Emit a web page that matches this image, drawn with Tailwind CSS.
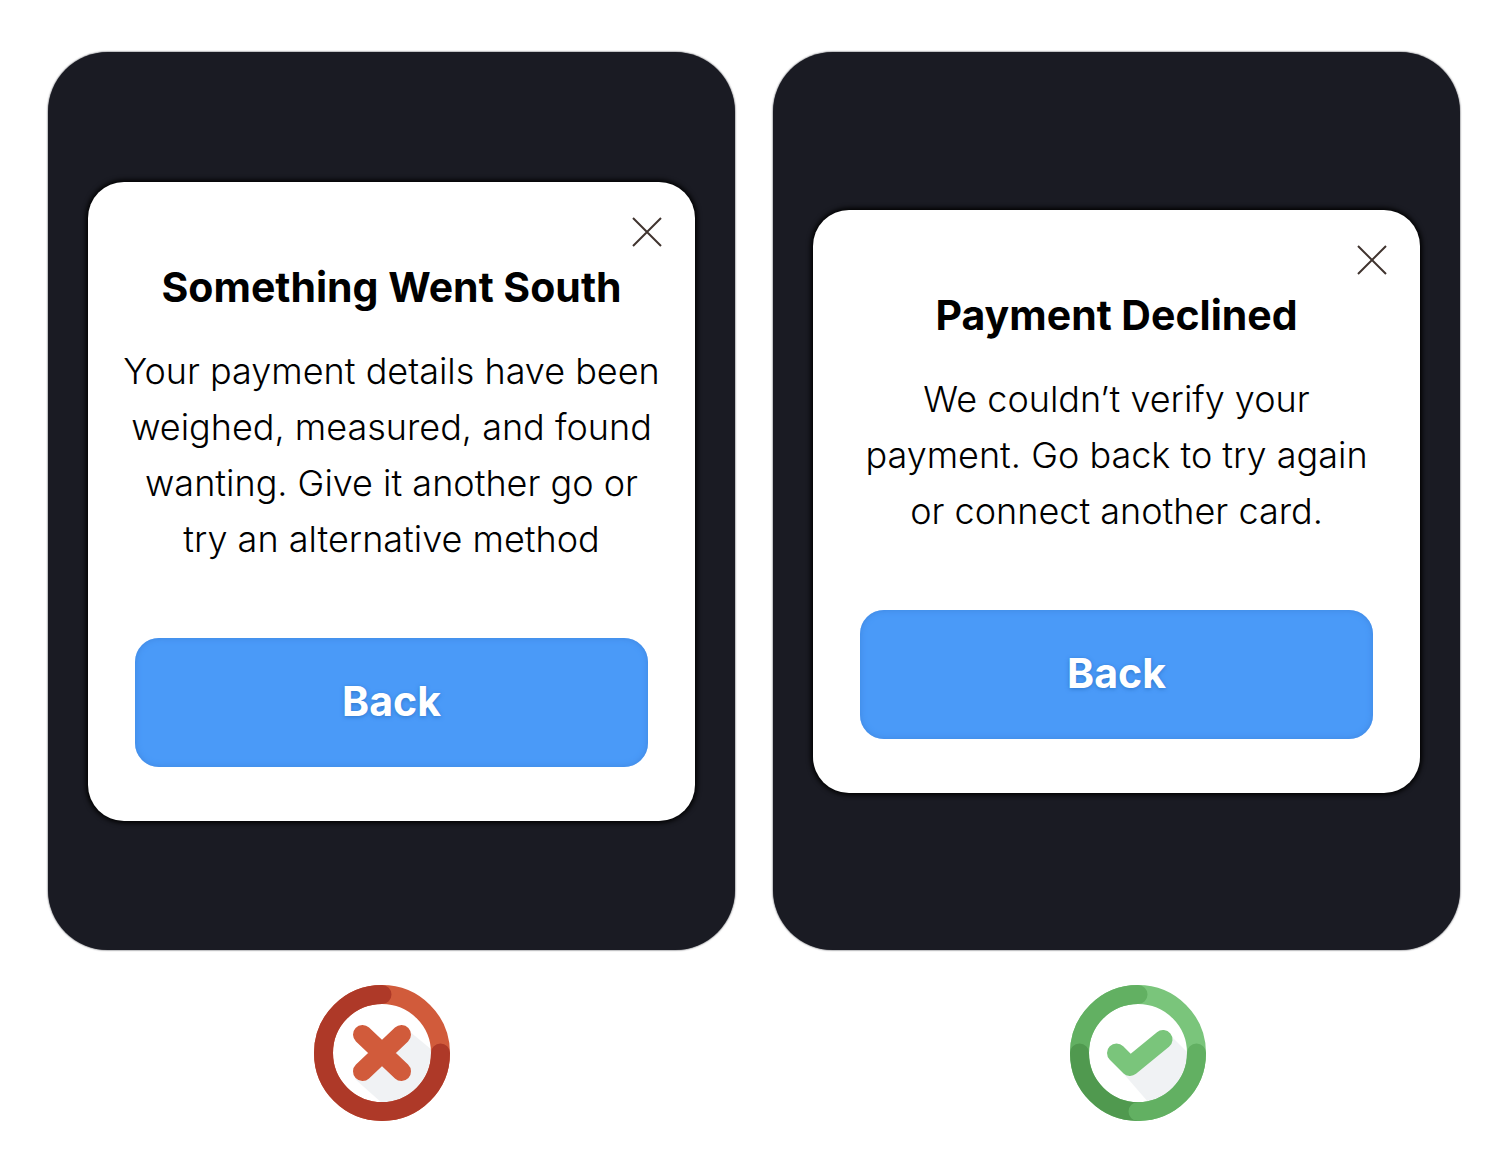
<!DOCTYPE html>
<html lang="en">
<head>
<meta charset="utf-8">
<meta name="viewport" content="width=device-width, initial-scale=1">
<title>Error message comparison</title>
<script src="https://cdn.jsdelivr.net/npm/@tailwindcss/browser@4"></script>
</head>
<body class="min-h-screen bg-white font-['Inter',sans-serif] text-black">
<main class="grid grid-cols-2 gap-x-[38px] pt-[52px] pr-[45px] pb-12 pl-12">

  <figure>
    <div class="flex min-h-[898px] items-center rounded-[60px] bg-[#1a1b23] px-10 shadow-[0_0_2px_#1a1b23]">
      <section role="dialog" aria-labelledby="title-bad" class="w-full rounded-[36px] bg-white pb-[54px] shadow-[0_0_5px_2px_#000000]">
        <div class="flex justify-end pt-[26px] pr-6">
          <button type="button" aria-label="Close" class="grid size-12 place-items-center">
            <svg class="size-[30px]" viewBox="0 0 30 30" fill="none" stroke="#40342f" stroke-width="2"><path d="M1 1 29 29M29 1 1 29"/></svg>
          </button>
        </div>
        <h2 id="title-bad" class="mt-[7px] text-center text-[41px] leading-12 font-bold">Something Went South</h2>
        <p class="mt-8 px-8 text-center text-[36px] leading-14 font-[340]">Your payment details have been weighed, measured, and found wanting. Give it another go or try an alternative method</p>
        <div class="mt-[71px] px-[47px]">
          <button type="button" class="h-[129px] w-full rounded-3xl bg-[#4a9af8] text-[41px] font-bold text-white shadow-[inset_0_0_6px_#3f86df] [text-shadow:0_1px_4px_#2f77cc]">Back</button>
        </div>
      </section>
    </div>
    <figcaption class="flex justify-center pt-[35px] pr-5">
      <svg role="img" aria-label="Don't" class="size-[136px]" viewBox="0 0 136 136" fill="none">
        <path d="M95 46 118 65A50 50 0 0 1 68 118L41 94Z" fill="#f0f2f4"/>
        <circle cx="68" cy="68" r="58.500" stroke="#d15b3b" stroke-width="19"/>
        <path d="M68 9.500A58.500 58.500 0 1 0 126.500 68" stroke="#ae3928" stroke-width="19" stroke-linecap="round"/>
        <path d="M48.500 49.500 87.500 86.500M87.500 49.500 48.500 86.500" stroke="#d15b3b" stroke-width="19" stroke-linecap="round"/>
      </svg>
    </figcaption>
  </figure>

  <figure>
    <div class="flex min-h-[898px] items-center rounded-[60px] bg-[#1a1b23] px-10 shadow-[0_0_2px_#1a1b23]">
      <section role="dialog" aria-labelledby="title-good" class="w-full rounded-[36px] bg-white pb-[54px] shadow-[0_0_5px_2px_#000000]">
        <div class="flex justify-end pt-[26px] pr-6">
          <button type="button" aria-label="Close" class="grid size-12 place-items-center">
            <svg class="size-[30px]" viewBox="0 0 30 30" fill="none" stroke="#40342f" stroke-width="2"><path d="M1 1 29 29M29 1 1 29"/></svg>
          </button>
        </div>
        <h2 id="title-good" class="mt-[7px] text-center text-[41px] leading-12 font-bold">Payment Declined</h2>
        <p class="mt-8 px-8 text-center text-[36px] leading-14 font-[340]">We couldn’t verify your payment. Go back to try again or connect another card.</p>
        <div class="mt-[71px] px-[47px]">
          <button type="button" class="h-[129px] w-full rounded-3xl bg-[#4a9af8] text-[41px] font-bold text-white shadow-[inset_0_0_6px_#3f86df] [text-shadow:0_1px_4px_#2f77cc]">Back</button>
        </div>
      </section>
    </div>
    <figcaption class="flex justify-center pt-[35px] pl-[42px]">
      <svg role="img" aria-label="Do" class="size-[136px]" viewBox="0 0 136 136" fill="none">
        <path d="M101 51 120 70A52 52 0 0 1 79 118L53 88Z" fill="#f0f2f4"/>
        <circle cx="68" cy="68" r="58.500" stroke="#7ac57b" stroke-width="19"/>
        <path d="M9.500 68A58.500 58.500 0 0 1 68 9.500" stroke="#62b062" stroke-width="19" stroke-linecap="round"/>
        <path d="M68 126.500A58.500 58.500 0 0 1 9.500 68" stroke="#50994f" stroke-width="19" stroke-linecap="round"/>
        <path d="M126.500 68A58.500 58.500 0 0 1 68 126.500" stroke="#62b062" stroke-width="19" stroke-linecap="round"/>
        <path d="M46.500 68 60 81.500 93 54.500" stroke="#7ac57b" stroke-width="19" stroke-linecap="round" stroke-linejoin="round"/>
      </svg>
    </figcaption>
  </figure>

</main>
</body>
</html>
